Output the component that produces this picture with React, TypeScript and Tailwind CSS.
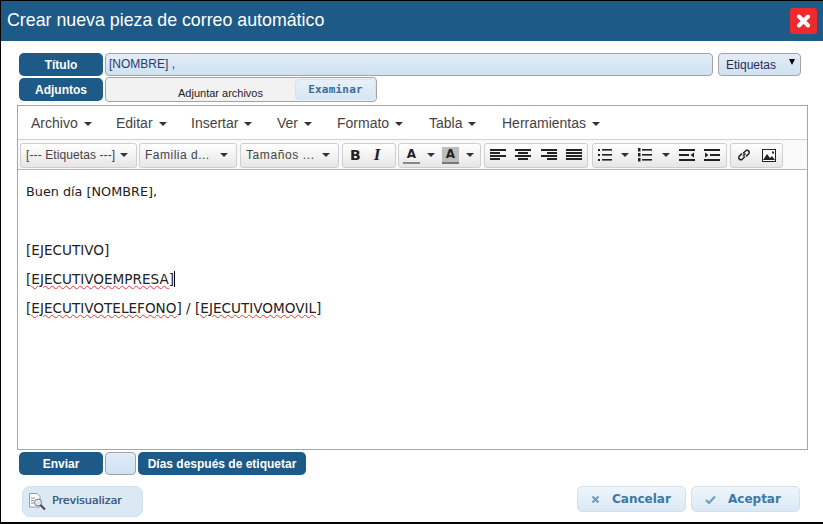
import type { ReactNode } from "react";

const Caret = () => <span className="inline-block w-0 h-0 border-x-[4px] border-x-transparent border-t-[4px] border-t-[#333]" />;

const Label = ({ children, className }: { children: ReactNode; className: string }) => (
  <div className={`flex items-center justify-center rounded-[5px] bg-[#1d5a87] text-white text-[12px] font-bold ${className}`}>{children}</div>
);

const menus = [
  { name: "Archivo", cls: "w-[85px] ml-[13px]" },
  { name: "Editar", cls: "w-[75px]" },
  { name: "Insertar", cls: "w-[86px]" },
  { name: "Ver", cls: "w-[60px]" },
  { name: "Formato", cls: "w-[92px]" },
  { name: "Tabla", cls: "w-[73px]" },
  { name: "Herramientas", cls: "w-[110px]" },
];

const Group = ({ children, className }: { children: ReactNode; className: string }) => (
  <div className={`flex items-center h-[25px] rounded-[3px] border border-[#cfcfcf] bg-gradient-to-b from-white to-[#e6e6e6] shrink-0 ${className}`}>{children}</div>
);

const Drop = ({ text, className }: { text: string; className: string }) => (
  <Group className={`justify-between pl-[5px] pr-[8px] text-[12px] text-[#444] ${className}`}>
    <span className="whitespace-nowrap">{text}</span>
    <Caret />
  </Group>
);

const Lines = ({ rows }: { rows: [number, number][] }) => (
  <svg width="16" height="14" viewBox="0 0 16 14" className="shrink-0">
    {rows.map(([x, w], i) => (
      <rect key={i} x={x} y={1 + i * 3} width={w} height="2" fill="#222" />
    ))}
  </svg>
);

const Word = ({ children }: { children: ReactNode }) => (
  <span className="underline decoration-wavy decoration-[#e33] decoration-1 underline-offset-1">{children}</span>
);

export default function App() {
  return (
    <div className="w-[823px] h-[524px] bg-white border-t border-l border-black border-b-2 border-r-0 overflow-hidden flex flex-col font-['Liberation_Sans',sans-serif] box-border">
      <header className="h-[40px] shrink-0 bg-[#1d5a87] flex items-center justify-between pl-[6px] pr-[5px]">
        <h1 className="text-[17.8px] leading-none text-white">Crear nueva pieza de correo automático</h1>
        <button className="w-[27px] h-[26px] mr-[1px] rounded-[3px] bg-[#ee2a2e] flex items-center justify-center mb-[1px]">
          <svg width="15" height="14" viewBox="0 0 15 14">
            <path d="M3 2.5 L12 11.5 M12 2.5 L3 11.5" stroke="#fff" strokeWidth="4" strokeLinecap="round" />
          </svg>
        </button>
      </header>

      <div className="flex flex-col pl-[16px] pt-[12px] w-[807px]">
        <div className="flex h-[23px] pl-[2px]">
          <Label className="w-[84px]">Título</Label>
          <div className="ml-[2px] w-[608px] rounded-[4px] border border-[#a3a3a3] bg-gradient-to-b from-[#e3edf7] to-[#cfe1f1] text-[12px] text-[#2a3a6a] pl-[3px] leading-[20px]">[NOMBRE] ,</div>
          <div className="ml-[5px] w-[83px] rounded-[4px] border border-[#a3a3a3] bg-gradient-to-b from-[#e3edf7] to-[#cfe1f1] text-[12px] text-[#2a2a5a] pl-[7px] flex items-center relative">
            Etiquetas
            <span className="absolute right-[5px] top-[5px] w-0 h-0 border-x-[3.5px] border-x-transparent border-t-[6px] border-t-black" />
          </div>
        </div>

        <div className="flex h-[25px] mt-[1px] pl-[2px] items-stretch">
          <Label className="w-[84px] mt-[1px] mb-[1px]">Adjuntos</Label>
          <div className="ml-[2px] w-[272px] rounded-[4px] border border-[#a3a3a3] bg-[#f2f2f2] flex text-[10px] text-[#222]">
            <span className="w-[189px] pl-[72px] pt-[10px] leading-none text-[11px] whitespace-nowrap">Adjuntar archivos</span>
            <span className="mt-[1px] w-[81px] h-[21px] rounded-[4px] border border-[#d5e3ef] bg-gradient-to-b from-[#e8f1f9] to-[#d6e6f3] flex items-center justify-center pt-[1px] font-['DejaVu_Sans_Mono',monospace] font-bold text-[11px] tracking-[0.2px] text-[#3a6d99]">Examinar</span>
          </div>
        </div>

        <div className="mt-[3px] w-[791px] h-[345px] border border-[#a5a5a5] flex flex-col">
          <nav className="h-[34px] shrink-0 flex items-center pt-[2px] bg-white text-[14px] text-[#444] border-b border-[#d2d2d2]">
            {menus.map((m) => (
              <span key={m.name} className={`flex items-center gap-[6px] shrink-0 ${m.cls}`}>
                {m.name}
                <Caret />
              </span>
            ))}
          </nav>
          <div className="h-[30px] shrink-0 flex items-center gap-[2px] pl-[2px] pt-[1px] bg-[#f9f9f9] border-b border-[#b5b5b5]">
            <Drop text="[--- Etiquetas ---]" className="w-[117px] tracking-[0.1px]" />
            <Drop text="Familia d..." className="w-[98px] tracking-[0.5px]" />
            <Drop text="Tamaños ..." className="ml-[1px] w-[99px] tracking-[0.6px]" />
            <Group className="ml-[1px] w-[54px] pl-[7px] gap-[13px] font-['DejaVu_Sans',sans-serif] text-[14px] text-[#222]">
              <b>B</b>
              <i className="font-bold font-['Liberation_Serif',serif] text-[17px]">I</i>
            </Group>
            <Group className="w-[83px] pl-[4px] gap-[7px] text-[13px] font-bold text-[#222]">
              <span className="w-[17px] text-center border-b-2 border-[#888] leading-[15px] font-['DejaVu_Sans',sans-serif] text-[12px]">A</span>
              <Caret />
              <span className="w-[17px] text-center bg-[#bdbdbd] border-b-2 border-[#777] leading-[15px] font-['DejaVu_Sans',sans-serif] text-[12px]">A</span>
              <Caret />
            </Group>
            <Group className="ml-[1px] w-[104px] justify-between px-[5px]">
              <Lines rows={[[0, 16], [0, 10], [0, 16], [0, 10]]} />
              <Lines rows={[[0, 16], [3, 10], [0, 16], [3, 10]]} />
              <Lines rows={[[0, 16], [6, 10], [0, 16], [6, 10]]} />
              <Lines rows={[[0, 16], [0, 16], [0, 16], [0, 16]]} />
            </Group>
            <Group className="ml-[2px] w-[135px] justify-between pl-[5px] pr-[6px]">
              <svg width="14" height="14" viewBox="0 0 14 14">
                {[2, 7, 12].map((y) => (
                  <g key={y} fill="#222">
                    <rect x="0" y={y - 1} width="2" height="2" />
                    <rect x="4" y={y - 1} width="10" height="1.6" />
                  </g>
                ))}
              </svg>
              <Caret />
              <svg width="14" height="16" viewBox="0 0 14 16">
                {[3, 8, 13].map((y) => (
                  <g key={y} fill="#222">
                    <rect x="0" y={y - 2} width="2.5" height="3.5" />
                    <rect x="4" y={y - 1} width="10" height="1.6" />
                  </g>
                ))}
              </svg>
              <Caret />
              <svg width="16" height="12" viewBox="0 0 16 12" fill="#222">
                <rect y="0" width="16" height="2" />
                <rect y="5" width="10" height="2" />
                <rect y="10" width="16" height="2" />
                <path d="M15 3.5 V8.5 L11.5 6 Z" />
              </svg>
              <svg width="16" height="12" viewBox="0 0 16 12" fill="#222">
                <rect y="0" width="16" height="2" />
                <rect x="6" y="5" width="10" height="2" />
                <rect y="10" width="16" height="2" />
                <path d="M1 3.5 V8.5 L4.5 6 Z" />
              </svg>
            </Group>
            <Group className="ml-[1px] w-[53px] justify-between px-[6px]">
              <svg width="14" height="14" viewBox="0 0 14 14" fill="none" stroke="#222" strokeWidth="1.5">
                <path d="M6 8 L8.5 5.5 M5 5.5 L2 8.5 a2.2 2.2 0 0 0 3 3 L8 8.5 M9 8.5 L12 5.5 a2.2 2.2 0 0 0 -3 -3 L6 5.5" />
              </svg>
              <svg width="14" height="13" viewBox="0 0 14 13">
                <rect x="0.5" y="0.5" width="13" height="12" fill="#fff" stroke="#222" />
                <path d="M1 11 L5 5 L8 9 L10 7 L13 11 Z" fill="#222" />
                <rect x="10" y="2.5" width="2" height="2" fill="#222" />
              </svg>
            </Group>
          </div>
          <div className="flex-1 bg-white pl-[8px] pt-[14px] font-['DejaVu_Sans',sans-serif] text-[13.6px] leading-[16px] text-[#222]">
            <p className="text-[12.8px]">Buen día [NOMBRE],</p>
            <p className="mt-[42px]">[EJECUTIVO]</p>
            <p className="mt-[13px] flex items-center">
              <Word>[EJECUTIVOEMPRESA]</Word>
              <span className="inline-block w-px h-[16px] bg-black" />
            </p>
            <p className="mt-[13px]">
              <Word>[EJECUTIVOTELEFONO]</Word> / <Word>[EJECUTIVOMOVIL]</Word>
            </p>
          </div>
        </div>

        <div className="flex h-[23px] mt-[2px] pl-[2px]">
          <Label className="w-[84px]">Enviar</Label>
          <div className="ml-[2px] w-[31px] rounded-[4px] border border-[#a3a3a3] bg-gradient-to-b from-[#e3edf7] to-[#cfe1f1]" />
          <Label className="ml-[2px] w-[168px]">Días después de etiquetar</Label>
        </div>

        <div className="flex justify-between items-start mt-[11px] pl-[5px] w-[783px]">
          <button className="w-[121px] h-[31px] rounded-[8px] border border-[#cfe0ef] bg-[#dbe9f5] flex items-center pl-[5px] gap-[5px] text-[11px] text-[#3f5f85] font-['DejaVu_Sans',sans-serif]">
            <svg width="19" height="19" viewBox="0 0 19 19" fill="none">
              <path d="M1.5 1.5 H9 L12 4.5 V15 H1.5 Z" fill="#fff" stroke="#9a9a9a" />
              <path d="M3 6 H7 M3 8.5 H6 M3 11 H6" stroke="#8a8a8a" />
              <circle cx="10" cy="10.5" r="3.5" fill="#dfe9f2" stroke="#6f7f8f" />
              <path d="M12.5 13 L17 17.5" stroke="#444" strokeWidth="2" />
            </svg>
            <span className="[text-shadow:0.3px_0_0_#3f5f85]">Previsualizar</span>
          </button>
          <div className="flex gap-[5px] text-[12px] font-bold text-[#3c78a8] font-['DejaVu_Sans',sans-serif]">
            <button className="w-[109px] h-[26px] rounded-[5px] border border-[#cfe0ef] bg-gradient-to-b from-[#eef5fb] to-[#dbe9f5] flex items-center pl-[13px] gap-[12px]">
              <svg width="9" height="9" viewBox="0 0 9 9">
                <path d="M1.5 1.5 L7.5 7.5 M7.5 1.5 L1.5 7.5" stroke="#6f9fc4" strokeWidth="2.2" />
              </svg>
              Cancelar
            </button>
            <button className="w-[109px] h-[26px] rounded-[5px] border border-[#cfe0ef] bg-gradient-to-b from-[#eef5fb] to-[#dbe9f5] flex items-center pl-[13px] gap-[12px]">
              <svg width="11" height="9" viewBox="0 0 11 9">
                <path d="M1 5 L4 8 L10 1.5" fill="none" stroke="#6f9fc4" strokeWidth="2.2" />
              </svg>
              Aceptar
            </button>
          </div>
        </div>
      </div>
    </div>
  );
}
